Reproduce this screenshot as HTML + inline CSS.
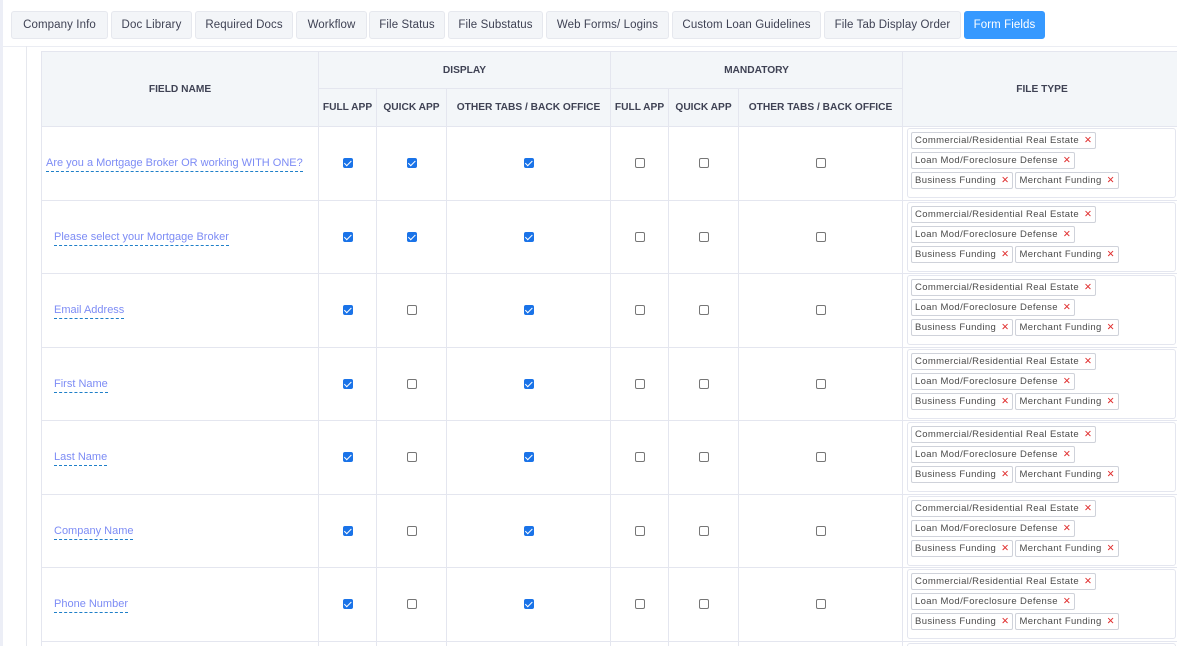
<!DOCTYPE html>
<html><head><meta charset="utf-8"><style>
*{box-sizing:border-box;margin:0;padding:0}
html,body{width:1177px;height:646px;overflow:hidden}
body{background:#fff;font-family:"Liberation Sans",sans-serif;position:relative}
.lstrip{position:absolute;left:0;top:0;width:3px;height:646px;background:#eceef6}
.vline{position:absolute;left:26px;top:46px;width:1px;height:600px;background:#e6e8ee}
.topbar{position:absolute;left:3px;top:5px;width:1174px;height:42px;background:#fff;border-bottom:1px solid #ebedf3}
.tab{position:absolute;top:11px;height:28px;background:#f3f5f8;border:1px solid #e6e8ee;border-radius:3px;font-size:11.5px;color:#3f4254;text-align:center;line-height:26px;letter-spacing:.1px}
.tab.act{background:#3699ff;border-color:#3699ff;color:#fff}
.wrap{position:absolute;left:41px;top:51px;width:1140px;height:595px;overflow:hidden}
table{border-collapse:collapse;table-layout:fixed;width:1140px}
th{background:#f3f6f9;border:1px solid #e4e6ef;font-size:10.2px;font-weight:bold;color:#3f4254;text-align:center}
td{border:1px solid #e4e6ef;height:73.5px;text-align:center;vertical-align:middle}
td.fn{text-align:left;padding-left:12px;padding-bottom:2px}
td.fn span{color:#7d8cf5;font-size:11px;border-bottom:1px dashed #1e7fc8;padding-bottom:2px}
.cb{display:inline-block;width:10px;height:10px;border:1px solid #767676;border-radius:2px;vertical-align:middle;background:#fff}
.cb.on{background:#1a73e8;border-color:#1a73e8;position:relative}
.cb.on:after{content:"";position:absolute;left:2.5px;top:0px;width:3px;height:5.5px;border:solid #fff;border-width:0 1.5px 1.5px 0;transform:rotate(45deg)}
.ft{vertical-align:top;padding:1px 0 0 4px;text-align:left}
.box{border:1px solid #e4e6ef;border-radius:3px;height:70px;width:269px;padding:3px 0 0 3px}
.ln{height:20px;white-space:nowrap}
.tag{display:inline-block;border:1px solid #cfd2da;border-radius:2px;background:#fff;font-size:9.5px;letter-spacing:.35px;color:#4a4a4a;height:17px;line-height:15px;padding:0 3px;margin-right:2px;vertical-align:top}
.tag b{color:#e03030;font-weight:normal;margin-left:5px}
</style></head><body>
<div class="lstrip"></div>
<div class="topbar"></div>
<div class="vline"></div>
<div class="tab" style="left:11px;width:97px">Company Info</div>
<div class="tab" style="left:111px;width:81px">Doc Library</div>
<div class="tab" style="left:195px;width:98px">Required Docs</div>
<div class="tab" style="left:296px;width:71px">Workflow</div>
<div class="tab" style="left:369px;width:76px">File Status</div>
<div class="tab" style="left:448px;width:95px">File Substatus</div>
<div class="tab" style="left:546px;width:123px">Web Forms/ Logins</div>
<div class="tab" style="left:672px;width:149px">Custom Loan Guidelines</div>
<div class="tab" style="left:824px;width:137px">File Tab Display Order</div>
<div class="tab act" style="left:964px;width:81px">Form Fields</div>
<div class="wrap">
<table>
<colgroup><col style="width:277px"><col style="width:58px"><col style="width:70px"><col style="width:164px"><col style="width:58px"><col style="width:70px"><col style="width:164px"><col style="width:279px"></colgroup>
<tr style="height:37px"><th rowspan="2">FIELD NAME</th><th colspan="3">DISPLAY</th><th colspan="3">MANDATORY</th><th rowspan="2">FILE TYPE</th></tr>
<tr style="height:38px"><th>FULL APP</th><th>QUICK APP</th><th>OTHER TABS / BACK OFFICE</th><th>FULL APP</th><th>QUICK APP</th><th>OTHER TABS / BACK OFFICE</th></tr>
<tr><td class="fn" style="padding-left:4px"><span>Are you a Mortgage Broker OR working WITH ONE?</span></td><td><i class="cb on"></i></td><td><i class="cb on"></i></td><td><i class="cb on"></i></td><td><i class="cb"></i></td><td><i class="cb"></i></td><td><i class="cb"></i></td><td class="ft"><div class="box"><div class="ln"><span class="tag">Commercial/Residential Real Estate<b>✕</b></span></div><div class="ln"><span class="tag">Loan Mod/Foreclosure Defense<b>✕</b></span></div><div class="ln"><span class="tag">Business Funding<b>✕</b></span><span class="tag">Merchant Funding<b>✕</b></span></div></div></td></tr>
<tr><td class="fn"><span>Please select your Mortgage Broker</span></td><td><i class="cb on"></i></td><td><i class="cb on"></i></td><td><i class="cb on"></i></td><td><i class="cb"></i></td><td><i class="cb"></i></td><td><i class="cb"></i></td><td class="ft"><div class="box"><div class="ln"><span class="tag">Commercial/Residential Real Estate<b>✕</b></span></div><div class="ln"><span class="tag">Loan Mod/Foreclosure Defense<b>✕</b></span></div><div class="ln"><span class="tag">Business Funding<b>✕</b></span><span class="tag">Merchant Funding<b>✕</b></span></div></div></td></tr>
<tr><td class="fn"><span>Email Address</span></td><td><i class="cb on"></i></td><td><i class="cb"></i></td><td><i class="cb on"></i></td><td><i class="cb"></i></td><td><i class="cb"></i></td><td><i class="cb"></i></td><td class="ft"><div class="box"><div class="ln"><span class="tag">Commercial/Residential Real Estate<b>✕</b></span></div><div class="ln"><span class="tag">Loan Mod/Foreclosure Defense<b>✕</b></span></div><div class="ln"><span class="tag">Business Funding<b>✕</b></span><span class="tag">Merchant Funding<b>✕</b></span></div></div></td></tr>
<tr><td class="fn"><span>First Name</span></td><td><i class="cb on"></i></td><td><i class="cb"></i></td><td><i class="cb on"></i></td><td><i class="cb"></i></td><td><i class="cb"></i></td><td><i class="cb"></i></td><td class="ft"><div class="box"><div class="ln"><span class="tag">Commercial/Residential Real Estate<b>✕</b></span></div><div class="ln"><span class="tag">Loan Mod/Foreclosure Defense<b>✕</b></span></div><div class="ln"><span class="tag">Business Funding<b>✕</b></span><span class="tag">Merchant Funding<b>✕</b></span></div></div></td></tr>
<tr><td class="fn"><span>Last Name</span></td><td><i class="cb on"></i></td><td><i class="cb"></i></td><td><i class="cb on"></i></td><td><i class="cb"></i></td><td><i class="cb"></i></td><td><i class="cb"></i></td><td class="ft"><div class="box"><div class="ln"><span class="tag">Commercial/Residential Real Estate<b>✕</b></span></div><div class="ln"><span class="tag">Loan Mod/Foreclosure Defense<b>✕</b></span></div><div class="ln"><span class="tag">Business Funding<b>✕</b></span><span class="tag">Merchant Funding<b>✕</b></span></div></div></td></tr>
<tr><td class="fn"><span>Company Name</span></td><td><i class="cb on"></i></td><td><i class="cb"></i></td><td><i class="cb on"></i></td><td><i class="cb"></i></td><td><i class="cb"></i></td><td><i class="cb"></i></td><td class="ft"><div class="box"><div class="ln"><span class="tag">Commercial/Residential Real Estate<b>✕</b></span></div><div class="ln"><span class="tag">Loan Mod/Foreclosure Defense<b>✕</b></span></div><div class="ln"><span class="tag">Business Funding<b>✕</b></span><span class="tag">Merchant Funding<b>✕</b></span></div></div></td></tr>
<tr><td class="fn"><span>Phone Number</span></td><td><i class="cb on"></i></td><td><i class="cb"></i></td><td><i class="cb on"></i></td><td><i class="cb"></i></td><td><i class="cb"></i></td><td><i class="cb"></i></td><td class="ft"><div class="box"><div class="ln"><span class="tag">Commercial/Residential Real Estate<b>✕</b></span></div><div class="ln"><span class="tag">Loan Mod/Foreclosure Defense<b>✕</b></span></div><div class="ln"><span class="tag">Business Funding<b>✕</b></span><span class="tag">Merchant Funding<b>✕</b></span></div></div></td></tr>
<tr><td class="fn"></td><td></td><td></td><td></td><td></td><td></td><td></td><td class="ft"><div class="box"></div></td></tr>
</table>
</div>
</body></html>
